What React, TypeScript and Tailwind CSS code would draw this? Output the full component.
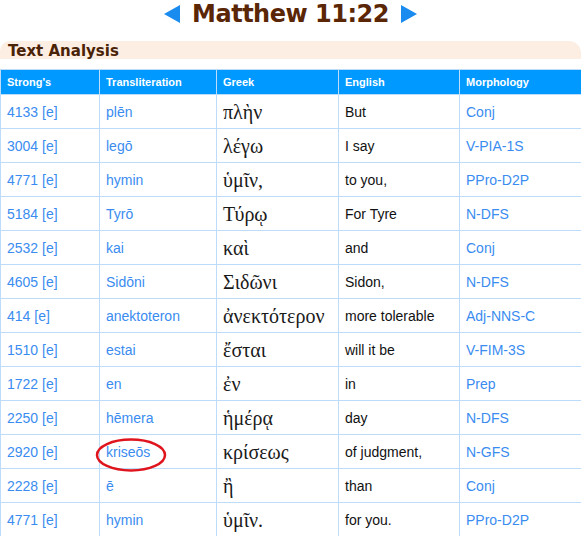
import React from 'react';

type Row = { num: string; translit: string; greek: string; english: string; morph: string; circled?: boolean };

const rows: Row[] = [
  { num: '4133', translit: 'plēn', greek: 'πλὴν', english: 'But', morph: 'Conj' },
  { num: '3004', translit: 'legō', greek: 'λέγω', english: 'I say', morph: 'V-PIA-1S' },
  { num: '4771', translit: 'hymin', greek: 'ὑμῖν,', english: 'to you,', morph: 'PPro-D2P' },
  { num: '5184', translit: 'Tyrō', greek: 'Τύρῳ', english: 'For Tyre', morph: 'N-DFS' },
  { num: '2532', translit: 'kai', greek: 'καὶ', english: 'and', morph: 'Conj' },
  { num: '4605', translit: 'Sidōni', greek: 'Σιδῶνι', english: 'Sidon,', morph: 'N-DFS' },
  { num: '414', translit: 'anektoteron', greek: 'ἀνεκτότερον', english: 'more tolerable', morph: 'Adj-NNS-C' },
  { num: '1510', translit: 'estai', greek: 'ἔσται', english: 'will it be', morph: 'V-FIM-3S' },
  { num: '1722', translit: 'en', greek: 'ἐν', english: 'in', morph: 'Prep' },
  { num: '2250', translit: 'hēmera', greek: 'ἡμέρᾳ', english: 'day', morph: 'N-DFS' },
  { num: '2920', translit: 'kriseōs', greek: 'κρίσεως', english: 'of judgment,', morph: 'N-GFS', circled: true },
  { num: '2228', translit: 'ē', greek: 'ἢ', english: 'than', morph: 'Conj' },
  { num: '4771', translit: 'hymin', greek: 'ὑμῖν.', english: 'for you.', morph: 'PPro-D2P' },
];

const headers = ["Strong's", 'Transliteration', 'Greek', 'English', 'Morphology'];

function Arrow({ dir }: { dir: 'left' | 'right' }) {
  return (
    <svg width="16" height="18" viewBox="0 0 16 18" className="block">
      {dir === 'left' ? <polygon points="16,0 16,18 0,9" fill="#1a8cf0" /> : <polygon points="0,0 0,18 16,9" fill="#1a8cf0" />}
    </svg>
  );
}

export default function App() {
  return (
    <div className="w-[581px] bg-white font-['Liberation_Sans',Arial,sans-serif]">
      <div className="flex items-center justify-center gap-[12px] h-[27px] pt-[1px]">
        <Arrow dir="left" />
        <h1 className="font-['DejaVu_Sans',Verdana,sans-serif] font-bold text-[24px] leading-none tracking-[-0.5px] text-[#5a2606]">
          Matthew 11:22
        </h1>
        <Arrow dir="right" />
      </div>

      <div className="mt-[15px] h-[18px] bg-[#fdeee3] rounded-tl-[10px] rounded-tr-[12px] pl-[8px]">
        <h2 className="font-['DejaVu_Sans',Verdana,sans-serif] font-bold text-[15px] leading-[21px] text-[#4a2206] -mt-[1px]">
          Text Analysis
        </h2>
      </div>

      <table className="mt-[10px] w-[581px] table-fixed border-collapse">
        <colgroup>
          <col className="w-[99px]" />
          <col className="w-[117px]" />
          <col className="w-[122px]" />
          <col className="w-[121px]" />
          <col className="w-[122px]" />
        </colgroup>
        <thead>
          <tr className="h-[25px] bg-[#0099ff]">
            {headers.map((h) => (
              <th
                key={h}
                className="border border-[#bcdcfa] px-[6px] text-left align-middle text-[11px] font-bold text-white"
              >
                {h}
              </th>
            ))}
          </tr>
        </thead>
        <tbody>
          {rows.map((r, i) => (
            <tr key={i} className="h-[34px]">
              <td className="border border-[#bcdcfa] px-[6px] pt-[1px] text-[14px] text-[#3a8cf0]">{r.num} [e]</td>
              <td className="relative border border-[#bcdcfa] px-[6px] pt-[1px] text-[14px] text-[#3a8cf0]">
                {r.translit}
                {r.circled && (
                  <svg width="72" height="36" viewBox="0 0 72 36" className="absolute left-[-5px] top-[2px]">
                    <ellipse cx="36" cy="18" rx="34" ry="15.5" fill="none" stroke="#e0141c" strokeWidth="2.5" />
                  </svg>
                )}
              </td>
              <td className="border border-[#bcdcfa] px-[6px] pt-[1px] font-['Liberation_Serif','DejaVu_Serif',serif] text-[20px] leading-[24px] text-[#1a1a1a]">
                {r.greek}
              </td>
              <td className="border border-[#bcdcfa] px-[6px] pt-[1px] text-[14px] text-[#111]">{r.english}</td>
              <td className="border border-[#bcdcfa] px-[6px] pt-[1px] text-[14px] text-[#3a8cf0]">{r.morph}</td>
            </tr>
          ))}
        </tbody>
      </table>
    </div>
  );
}
